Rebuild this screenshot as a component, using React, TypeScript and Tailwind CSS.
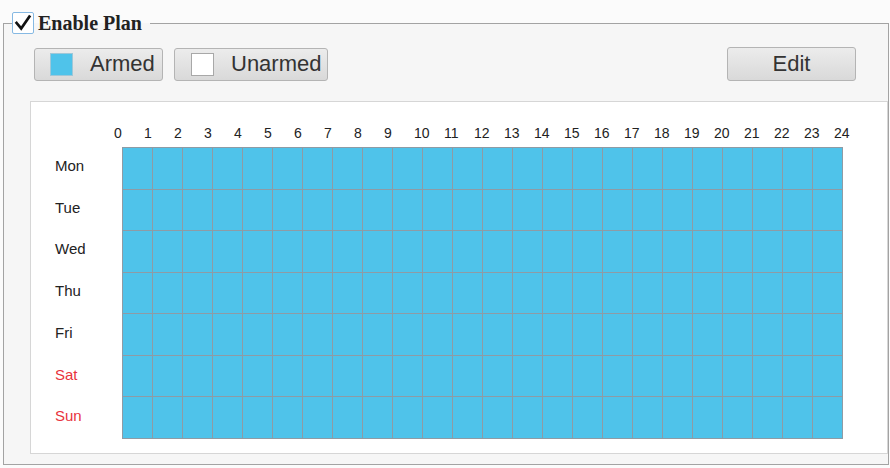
import React from 'react';

const hours = Array.from({ length: 25 }, (_, i) => i);
const days = ['Mon', 'Tue', 'Wed', 'Thu', 'Fri', 'Sat', 'Sun'];
const weekend = ['Sat', 'Sun'];

const App: React.FC = () => {
  return (
    <div className="w-[890px] h-[468px] bg-[#fbfbfb] overflow-hidden font-['Liberation_Sans',Arial,sans-serif]">
      <fieldset className="ml-[3px] mt-[12px] w-[886px] h-[453px] border border-[#a3a3a3] bg-[#f6f6f6] px-[26px]">
        {/* Legend with plan checkbox */}
        <legend className="-ml-[18px] pr-[8px] flex items-center gap-[4px] h-[22px]">
          <span className="w-[22px] h-[22px] border border-[#86b9e3] bg-white rounded-[2px] flex items-center justify-center">
            <svg viewBox="0 0 22 22" className="w-[20px] h-[20px]">
              <path d="M4 11 L9 17 L18 4" fill="none" stroke="#111" strokeWidth={3} strokeLinecap="square" />
            </svg>
          </span>
          <span className="font-['Liberation_Serif',serif] font-bold text-[20px] text-[#222] leading-none">Enable Plan</span>
        </legend>

        {/* Buttons */}
        <div className="mt-[13px] ml-[4px] mr-[4px] flex items-center">
          <button className="w-[129px] h-[33px] rounded-[3px] border border-[#b4b4b4] bg-gradient-to-b from-[#ececec] to-[#d9d9d9] flex items-center pl-[15px] gap-[17px]">
            <span className="w-[23px] h-[23px] bg-[#4fc3ea] border border-[#9fc7d8]" />
            <span className="text-[22px] text-[#333] leading-none">Armed</span>
          </button>
          <button className="ml-[11px] w-[154px] h-[33px] rounded-[3px] border border-[#b4b4b4] bg-gradient-to-b from-[#ececec] to-[#d9d9d9] flex items-center pl-[16px] gap-[17px]">
            <span className="w-[23px] h-[23px] bg-white border border-[#a8a8a8]" />
            <span className="text-[22px] text-[#333] leading-none">Unarmed</span>
          </button>
          <button className="ml-auto mr-[2px] w-[129px] h-[34px] rounded-[3px] border border-[#b4b4b4] bg-gradient-to-b from-[#ececec] to-[#d9d9d9] text-[22px] text-[#333] leading-none">
            Edit
          </button>
        </div>

        {/* Schedule panel */}
        <div className="mt-[20px] -mr-[26px] h-[353px] bg-white border border-[#d6d6d6] pt-[23px]">
          <div className="flex h-[16px] ml-[83px] mb-[6px]">
            {hours.map((h) => (
              <span key={h} className="w-[30px] text-left text-[14px] leading-[16px] text-[#222]">
                {h}
              </span>
            ))}
          </div>
          <div className="flex">
            <div className="w-[91px] pl-[24px] flex flex-col">
              {days.map((d) => (
                <div
                  key={d}
                  className={`h-[41.7px] flex items-center pb-[3px] text-[15px] ${weekend.includes(d) ? 'text-[#e8333c]' : 'text-[#222]'}`}
                >
                  {d}
                </div>
              ))}
            </div>
            <div className="w-[721px] h-[292px] grid grid-cols-24 grid-rows-7 gap-px bg-[#8e9ba5] border border-[#8e9ba5]">
              {Array.from({ length: 168 }, (_, i) => (
                <div key={i} className="bg-[#4fc3ea]" />
              ))}
            </div>
          </div>
        </div>
      </fieldset>
    </div>
  );
};

export default App;
